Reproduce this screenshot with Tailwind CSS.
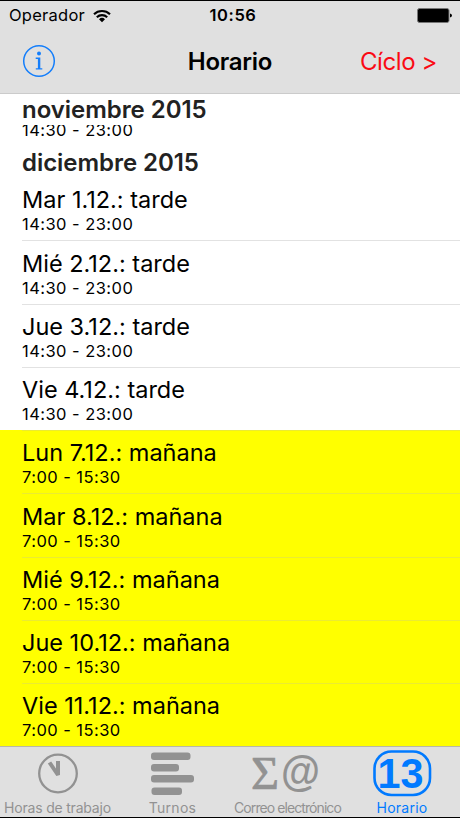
<!DOCTYPE html>
<html lang="es">
<head>
  <meta charset="UTF-8">
  <meta name="viewport" content="width=device-width, initial-scale=1.0">
  <title>Horario</title>
  <script src="https://cdn.jsdelivr.net/npm/@tailwindcss/browser@4"></script>
</head>
<body class="bg-white">
  <div class="w-[460px] h-[818px] flex flex-col overflow-hidden whitespace-nowrap border-t border-b border-black bg-white text-black font-['Inter',sans-serif]">

    <!-- Header -->
    <header class="h-[93px] shrink-0 bg-[#e0e0e0] border-b border-[#cbcbcb]">
      <!-- Status bar -->
      <div class="h-7 grid grid-cols-3 items-center pt-px pl-[9px] pr-[8px]">
        <div class="flex items-center gap-2">
          <span class="text-[16.5px] tracking-[0.25px]">Operador</span>
          <svg class="w-[18px] h-[14px]" viewBox="0 0 18 14" fill="none" stroke="#000" stroke-width="2.1">
            <path d="M1 5.2a11.6 11.6 0 0 1 16 0M3.8 8.2a7.6 7.6 0 0 1 10.4 0"/>
            <path d="M9 13.2L6 10.2a4.4 4.4 0 0 1 6 0z" fill="#000" stroke="none"/>
          </svg>
        </div>
        <span class="pl-[5px] text-center text-[16.5px] font-semibold tracking-[0.6px]">10:56</span>
        <svg class="w-[35px] h-[15px] justify-self-end" viewBox="0 0 35 15">
          <rect x="0.5" y="0.5" width="31.5" height="14" rx="2" fill="#000" stroke="#777"/>
          <path d="M33 5.5q2 .3 2 2t-2 2z"/>
        </svg>
      </div>
      <!-- Navigation bar -->
      <nav class="h-[64px] grid grid-cols-3 items-center pl-[22px] pr-[23px]">
        <svg class="w-[34px] h-[34px]" viewBox="0 0 34 34">
          <circle cx="17" cy="17" r="15.3" fill="none" stroke="#147efb" stroke-width="1.5"/>
          <circle cx="17" cy="9.6" r="2" fill="#147efb"/>
          <path d="M13.7 13.6h4.6v10.7h2v1.2h-6.5v-1.2h2.1v-9.4h-2.2z" fill="#147efb"/>
        </svg>
        <h1 class="pt-px pl-px text-center text-2xl font-semibold tracking-[-0.25px]">Horario</h1>
        <a href="#" class="pt-px justify-self-end text-[24px] tracking-[-0.4px] text-[#fa0a14]">Cíclo &gt;</a>
      </nav>
    </header>

    <!-- Shift list -->
    <main class="flex-1 overflow-hidden">
      <h2 class="h-[31px] pl-[22px] leading-[32px] text-2xl font-semibold tracking-[-0.05px] text-[#222]">noviembre 2015</h2>
      <div class="h-[20px] overflow-hidden flex flex-col justify-end pl-[22px]">
        <p class="h-[25px] shrink-0 leading-5 text-[16.5px] tracking-[0.45px]">14:30 - 23:00</p>
      </div>
      <h2 class="h-[32px] pl-[22px] leading-[36px] text-2xl font-semibold tracking-[-0.05px] text-[#222]">diciembre 2015</h2>
      <ul id="shifts"></ul>
    </main>

    <!-- Tab bar -->
    <footer class="h-[71px] shrink-0 grid grid-cols-4 bg-[#e0e0e0] border-t border-[#b8b8a8] text-[#929292]">
      <a href="#" class="flex flex-col items-center">
        <svg class="w-[44px] h-[51px]" viewBox="0 0 44 51" fill="none" stroke="currentColor">
          <circle cx="22" cy="26.5" r="18.8" stroke-width="2.3"/>
          <path d="M13.5 15.5L22 28V14" stroke-width="4" stroke-linejoin="bevel"/>
        </svg>
        <span class="text-[14px] leading-[19px] tracking-[-0.2px]">Horas de trabajo</span>
      </a>
      <a href="#" class="flex flex-col items-center">
        <svg class="w-[44px] h-[51px]" viewBox="0 0 44 51" fill="currentColor">
          <rect x="0" y="5.5" width="39.5" height="7.5" rx="3"/>
          <rect x="0" y="17" width="28" height="7.5" rx="3"/>
          <rect x="0" y="28" width="43" height="7.5" rx="3"/>
          <rect x="0.5" y="40.5" width="30.5" height="7.5" rx="3"/>
        </svg>
        <span class="text-[14px] leading-[19px] tracking-[0.3px]">Turnos</span>
      </a>
      <a href="#" class="flex flex-col items-center">
        <svg class="w-[72px] h-[51px]" viewBox="0 0 72 51" fill="currentColor">
          <text x="-1" y="42" font-family="Liberation Serif" font-size="47" textLength="28" lengthAdjust="spacingAndGlyphs" stroke="currentColor" stroke-width="0.7">Σ</text>
          <text x="29" y="39" font-family="Liberation Sans" font-weight="bold" font-size="42" textLength="39" lengthAdjust="spacingAndGlyphs">@</text>
        </svg>
        <span class="text-[14px] leading-[19px] tracking-[-0.92px]">Correo electrónico</span>
      </a>
      <a href="#" class="flex flex-col items-center pr-px text-[#007aff]">
        <svg class="w-[60px] h-[51px]" viewBox="0 0 60 51" fill="currentColor">
          <rect x="2.5" y="4.5" width="55.5" height="43.5" rx="17" fill="none" stroke="currentColor" stroke-width="2.6"/>
          <text x="5.5" y="41" font-family="Liberation Sans" font-weight="bold" font-size="42.5" textLength="46" lengthAdjust="spacingAndGlyphs">13</text>
        </svg>
        <span class="text-[14px] leading-[19px] tracking-[0.25px]">Horario</span>
      </a>
    </footer>
  </div>

  <script>
    const shifts = [
      ['Mar 1.12.: tarde', '14:30 - 23:00'],
      ['Mié 2.12.: tarde', '14:30 - 23:00'],
      ['Jue 3.12.: tarde', '14:30 - 23:00'],
      ['Vie 4.12.: tarde', '14:30 - 23:00'],
      ['Lun 7.12.: mañana', '7:00 - 15:30'],
      ['Mar 8.12.: mañana', '7:00 - 15:30'],
      ['Mié 9.12.: mañana', '7:00 - 15:30'],
      ['Jue 10.12.: mañana', '7:00 - 15:30'],
      ['Vie 11.12.: mañana', '7:00 - 15:30'],
    ];

    document.getElementById('shifts').innerHTML = shifts.map(([title, hours], i) => {
      const morning = title.endsWith('mañana');
      const line = i === 0 ? 'border-transparent' : morning ? 'border-[#ebeb32]' : 'border-[#e2e2e2]';
      return `
        <li class="h-[63.25px] pl-[22px] ${morning ? 'bg-[#ffff00]' : 'bg-white'}">
          <div class="h-full pt-[8.4px] border-t ${line}">
            <p class="text-[23.5px] leading-[28px]">${title}</p>
            <p class="text-[16.5px] leading-5 tracking-[0.45px]">${hours}</p>
          </div>
        </li>`;
    }).join('');
  </script>
</body>
</html>
